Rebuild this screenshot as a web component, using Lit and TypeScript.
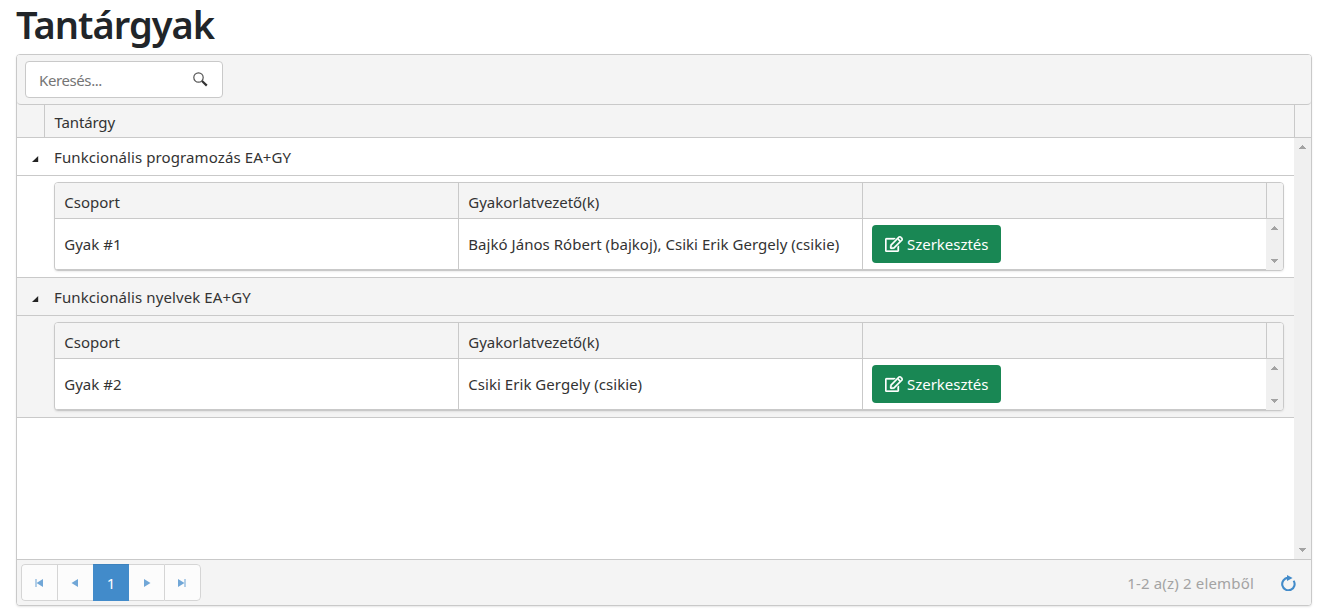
import { LitElement, html, css, svg } from "lit";
import { customElement, property } from "lit/decorators.js";

interface Group { name: string; teachers: string }
interface Subject { title: string; group: Group }

const subjects: Subject[] = [
  { title: "Funkcionális programozás EA+GY", group: { name: "Gyak #1", teachers: "Bajkó János Róbert (bajkoj), Csiki Erik Gergely (csikie)" } },
  { title: "Funkcionális nyelvek EA+GY", group: { name: "Gyak #2", teachers: "Csiki Erik Gergely (csikie)" } },
];

const arrow = (down: boolean) => html`<svg width="7" height="4" viewBox="0 0 7 4" shape-rendering="crispEdges" fill="#a3a3a3">
  ${down ? svg`<path d="M0 0h7v1H6v1H5v1H4v1H3V3H2V2H1V1H0z"/>` : svg`<path d="M3 0h1v1h1v1h1v1h1v1H0V3h1V2h1V1h1z"/>`}
</svg>`;

@customElement("scroll-track")
export class ScrollTrack extends LitElement {
  static styles = css`
    :host { display: flex; flex-direction: column; justify-content: space-between; align-items: center; width: 17px; box-sizing: border-box; padding: 7px 0; background: #f0f0f0; flex: none; }
    svg { display: block; }
  `;
  render() { return html`${arrow(false)}${arrow(true)}`; }
}

@customElement("group-grid")
export class GroupGrid extends LitElement {
  @property({ attribute: false }) group!: Group;
  static styles = css`
    :host { display: block; box-sizing: border-box; width: 1230px; height: 89px; border: 1px solid #c9c9c9; border-radius: 4px; overflow: hidden; box-shadow: 0 1px 2px rgba(0,0,0,.08); background: #fff; }
    .row { display: grid; grid-template-columns: 403px 404px 404px 17px; }
    .head { height: 35px; background: #f4f4f4; border-bottom: 1px solid #c9c9c9; }
    .body { height: 51px; }
    .cell { box-sizing: border-box; padding-left: 9.3px; display: flex; align-items: center; border-left: 1px solid #c9c9c9; white-space: nowrap; }
    .cell:first-child { border-left: 0; }
    .head .cell { padding-top: 2px; }
    .body .cell { border-bottom: 1px solid #c9c9c9; }
    .cell:last-child { padding: 0; }
    .teachers { letter-spacing: 0.04px; }
    .btn { box-sizing: border-box; width: 129px; height: 38px; padding: 0 0 0 13px; display: flex; align-items: center; border: 0; border-radius: 4px; background: #198754; color: #fff; font: inherit; letter-spacing: -0.03px; }
    .action { padding-left: 9px; }
    .btn svg { display: block; margin-right: 4px; stroke: currentColor; stroke-width: 10; }
  `;
  render() {
    return html`
      <div class="row head">
        <div class="cell"><span>Csoport</span></div>
        <div class="cell"><span>Gyakorlatvezető(k)</span></div>
        <div class="cell"></div>
        <div class="cell"></div>
      </div>
      <div class="row body">
        <div class="cell"><span>${this.group.name}</span></div>
        <div class="cell"><span class="teachers">${this.group.teachers}</span></div>
        <div class="cell action"><button class="btn">
          <svg width="18" height="16" viewBox="0 0 576 512" fill="currentColor"><path d="M402.300 344.900l32-32c5-5 13.700-1.500 13.700 5.700V464c0 26.500-21.500 48-48 48H48c-26.500 0-48-21.500-48-48V112c0-26.500 21.500-48 48-48h273.500c7.100 0 10.700 8.600 5.700 13.700l-32 32c-1.500 1.500-3.500 2.300-5.700 2.300H48v352h352V350.500c0-2.100.8-4.100 2.300-5.600zm156.600-201.800L296.300 405.700l-90.400 10c-26.200 2.900-48.500-19.200-45.600-45.600l10-90.400L432.900 17.100c22.900-22.900 59.900-22.900 82.700 0l43.200 43.200c22.900 22.900 22.900 60 .1 82.800zM460.100 174L402 115.900 216.200 301.800l-7.300 65.300 65.300-7.300L460.100 174zm64.800-79.700l-43.200-43.200c-4.100-4.100-10.800-4.100-14.800 0L436 82l58.100 58.100 30.900-30.900c4-4.200 4-10.800-.1-14.900z"/></svg>
          <span>Szerkesztés</span></button></div>
        <scroll-track></scroll-track>
      </div>`;
  }
}

@customElement("app-root")
export class AppRoot extends LitElement {
  static styles = css`
    :host { display: block; box-sizing: border-box; height: 616px; padding: 0 9px 0 16px; background: #fff; color: #333; font: 15px/24px "Noto Sans", "Open Sans", sans-serif; }
    h1 { margin: 0; height: 54px; font-size: 38px; line-height: 48px; font-weight: 600; letter-spacing: -0.98px; color: #212529; white-space: nowrap; }
    .grid { box-sizing: border-box; width: 1296px; height: 552px; display: flex; flex-direction: column; border: 1px solid #c9c9c9; border-radius: 4px; background: #fff; box-shadow: 0 1px 2px rgba(0,0,0,.1); overflow: hidden; }
    .headwrap { background: #f4f4f4; }
    .toolbar { box-sizing: border-box; height: 50px; padding: 6px 8px; border-bottom: 1px solid #c9c9c9; border-radius: 0 0 4px 4px; background: #f4f4f4; }
    .search { box-sizing: border-box; width: 198px; height: 37px; padding: 0 14px 0 13px; display: flex; align-items: center; justify-content: space-between; border: 1px solid #c9c9c9; border-radius: 4px; background: #fff; color: #757575; }
    .search span { letter-spacing: -0.4px; }
    .head { height: 32px; display: grid; grid-template-columns: 27px 1250px 17px; border-bottom: 1px solid #c9c9c9; }
    .head div + div { border-left: 1px solid #c9c9c9; }
    .head .label { padding: 5px 0 0 9.5px; letter-spacing: -0.15px; }
    .content { flex: 1; display: flex; min-height: 0; }
    .rows { width: 1277px; }
    .master { height: 37px; display: flex; align-items: center; border-bottom: 1px solid #c9c9c9; }
    .master svg { margin: 4px 15px 0 15px; }
    .master span { white-space: nowrap; letter-spacing: 0.1px; }
    .detail { height: 95px; padding: 6px 0 0 37px; border-bottom: 1px solid #c9c9c9; }
    .alt { background: #f4f4f4; }
    .pager { box-sizing: border-box; height: 46px; border-top: 1px solid #c9c9c9; background: #f4f4f4; padding: 4px 15px 4px 4px; display: flex; align-items: center; }
    .pages { box-sizing: border-box; width: 180px; height: 37px; display: grid; grid-template-columns: 36px 36px 36px 35px 37px; border-radius: 4px; overflow: hidden; }
    .page { box-sizing: border-box; display: flex; align-items: center; justify-content: center; padding-right: 1px; background: #fcfcfc; border: 1px solid #d5d5d5; border-right: 0; }
    .page:first-child { border-radius: 4px 0 0 4px; }
    .page:last-child { border-right: 1px solid #d5d5d5; border-radius: 0 4px 4px 0; }
    .page.current { background: #428bca; border-color: #3d82bd #428bca #428bca; color: #fff; }
    .page.next { border-left: 0; padding-right: 0; }
    .info { margin-left: auto; color: #a3a3a3; letter-spacing: 0.17px; }
    .refresh { margin-left: 26px; }
  `;
  render() {
    return html`
      <h1><span>Tantárgyak</span></h1>
      <div class="grid">
        <div class="headwrap">
          <div class="toolbar"><div class="search"><span>Keresés...</span>
            <svg width="15" height="15" viewBox="0 0 15 15" fill="none"><circle cx="5.500" cy="5.500" r="4.700" stroke="#555" stroke-width="1.200"/><path d="M9 9l4.800 4.600" stroke="#333" stroke-width="2.200"/></svg>
          </div></div>
          <div class="head"><div></div><div class="label"><span>Tantárgy</span></div><div></div></div>
        </div>
        <div class="content">
          <div class="rows">
            ${subjects.map((s, i) => html`
              <div class="master ${i % 2 ? "alt" : ""}">
                <svg width="7" height="6" viewBox="0 0 7 6"><path d="M6.200 0v6H0z" fill="#222"/></svg>
                <span>${s.title}</span>
              </div>
              <div class="detail ${i % 2 ? "alt" : ""}"><group-grid .group=${s.group}></group-grid></div>`)}
          </div>
          <scroll-track></scroll-track>
        </div>
        <div class="pager">
          <div class="pages">
            <div class="page"><svg width="8" height="8" viewBox="0 0 8 8"><path d="M0 0h2v8H0z" fill="#b3cfe8"/><path d="M8 0v8L1.500 4z" fill="#71a7d7"/></svg></div>
            <div class="page"><svg width="8" height="8" viewBox="0 0 8 8"><path d="M7 0v8L.5 4z" fill="#71a7d7"/></svg></div>
            <div class="page current"><span>1</span></div>
            <div class="page next"><svg width="8" height="8" viewBox="0 0 8 8"><path d="M1 0v8l6.500-4z" fill="#71a7d7"/></svg></div>
            <div class="page"><svg width="8" height="8" viewBox="0 0 8 8"><path d="M6 0h2v8H6z" fill="#b3cfe8"/><path d="M0 0v8l6.500-4z" fill="#71a7d7"/></svg></div>
          </div>
          <span class="info">1-2 a(z) 2 elemből</span>
          <svg class="refresh" width="16" height="16" viewBox="0 0 16 16" fill="none"><path d="M13.600 5.700A6.200 6.200 0 1 1 8 2.900" stroke="#428bca" stroke-width="2.100"/><path d="M7 0v1.900H6v2h1v2L12.600 3z" fill="#428bca"/></svg>
        </div>
      </div>`;
  }
}
